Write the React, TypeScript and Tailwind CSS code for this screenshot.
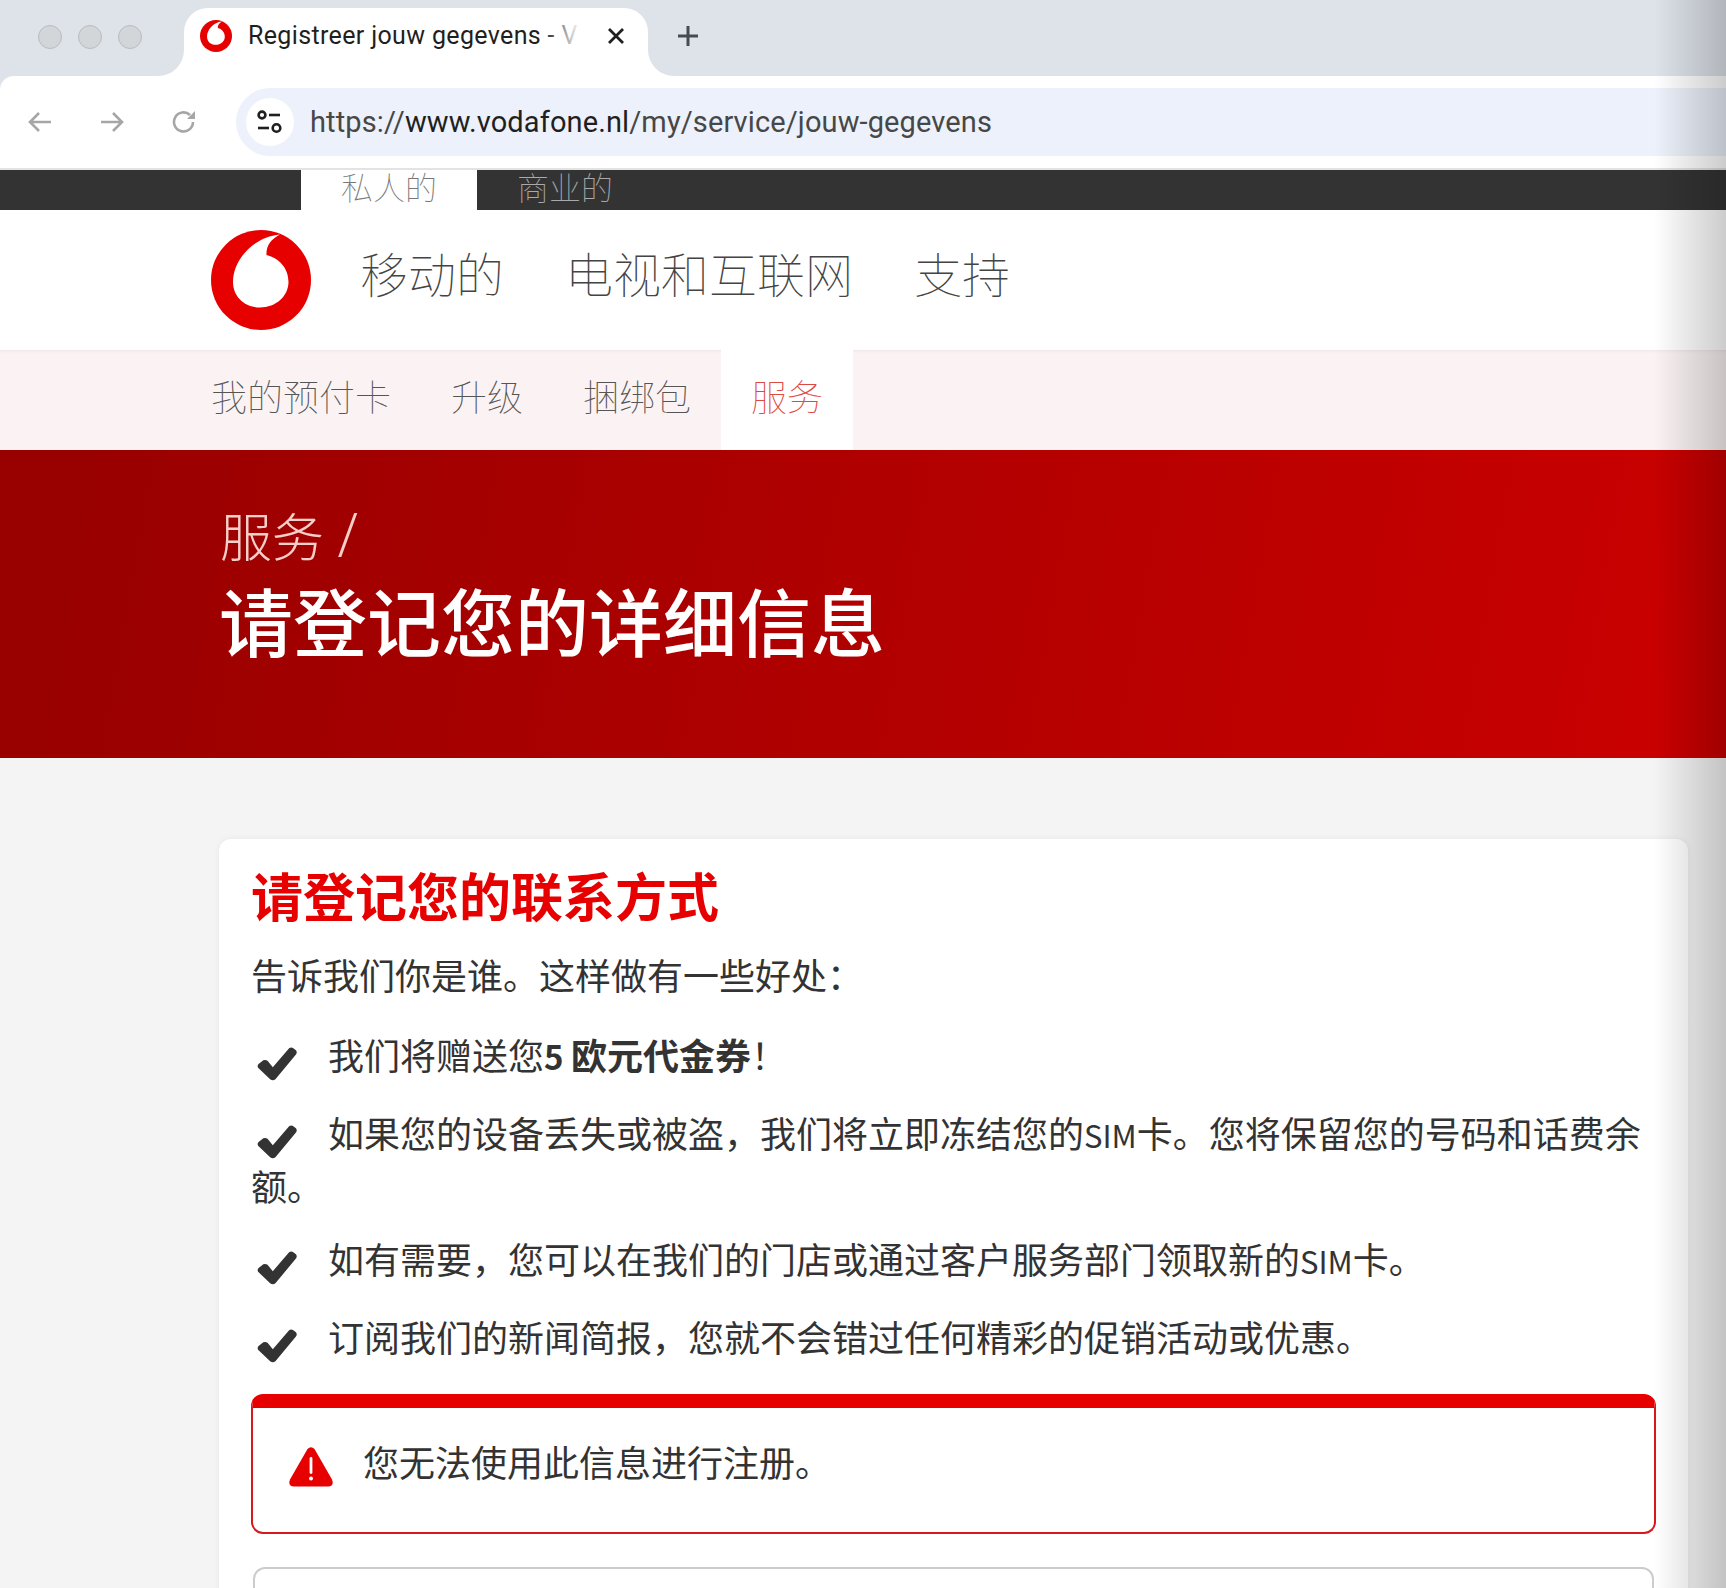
import React from "react";

function VodafoneLogo({ className }: { className: string }) {
  return (
    <svg viewBox="0 0 100 100" className={className}>
      <circle cx="50" cy="50" r="50" fill="#e60000" />
      <path
        d="M69 4.5 C42 7 22 30 22 52 C22 67 34 77.5 49 77.5 C65 77.5 77.5 66 77.5 52 C77.5 38 68 28 55.5 25 C55 16 60 9 69 4.5 Z"
        fill="#ffffff"
      />
    </svg>
  );
}

function Check() {
  return (
    <svg
      viewBox="0 0 38 32"
      className="inline-block w-[40px] h-[34px] ml-[6px] mr-[31px] align-[-11px]"
    >
      <path
        d="M1 19.5 Q0 17.5 1.5 16 L6 12.5 Q8 11.5 10 13 L15 19 L30.5 1 Q32.5 -0.5 34.5 1 L37 3 Q38.5 5 37 7 L17.5 30.5 Q15 32.5 12.5 30.5 Z"
        fill="#333333"
      />
    </svg>
  );
}

function Item({ children, tight }: { children: React.ReactNode; tight?: boolean }) {
  return (
    <li className={tight ? "mb-[22px] text-[36px] leading-[51px] text-[#333333]" : "mb-[25px] text-[36px] leading-[51px] text-[#333333]"}>
      <Check />
      {children}
    </li>
  );
}

export default function App() {
  return (
    <div className="relative h-[1588px] overflow-hidden bg-[#f4f4f4] [font-family:'Noto_Sans_CJK_SC','Noto_Sans',sans-serif]">
      {/* Browser chrome */}
      <div className="bg-[#dee3ea] [font-family:Roboto,'Liberation_Sans',sans-serif]">
        <div className="flex h-[76px] bg-white">
          <div className="flex w-[184px] shrink-0 items-start gap-[16px] rounded-br-[26px] bg-[#dee3ea] pl-[38px] pt-[25px]">
            <span className="h-[24px] w-[24px] rounded-full border border-[#b9bcbf] bg-[#d3d6d9]" />
            <span className="h-[24px] w-[24px] rounded-full border border-[#b9bcbf] bg-[#d3d6d9]" />
            <span className="h-[24px] w-[24px] rounded-full border border-[#b9bcbf] bg-[#d3d6d9]" />
          </div>
          <div className="w-[464px] shrink-0 bg-[#dee3ea]">
            <div className="relative mt-[8px] flex h-[68px] items-center rounded-t-[24px] bg-white pl-[16px]">
              <VodafoneLogo className="h-[32px] w-[32px] shrink-0 -mt-[12px]" />
              <div className="relative ml-[16px] -mt-[12px] w-[332px] overflow-hidden whitespace-nowrap text-[25px] tracking-[0.35px] leading-[32px] text-[#1f1f1f]">
                Registreer jouw gegevens - V
                <div className="absolute right-0 top-0 h-full w-[36px] bg-gradient-to-r from-transparent to-white" />
              </div>
              <svg viewBox="0 0 18 18" className="ml-[27px] -mt-[12px] h-[18px] w-[18px]">
                <path d="M2 2 L16 16 M16 2 L2 16" stroke="#1f1f1f" strokeWidth="2.8" />
              </svg>
            </div>
          </div>
          <div className="flex flex-1 items-start rounded-bl-[26px] bg-[#dee3ea] pl-[29px] pt-[25px]">
            <svg viewBox="0 0 22 22" className="h-[22px] w-[22px]">
              <path d="M11 1 V21 M1 11 H21" stroke="#474a50" strokeWidth="3" />
            </svg>
          </div>
        </div>
        <div className="flex h-[92px] items-center rounded-tl-[14px] bg-white pl-[28px]">
          <svg viewBox="0 0 24 24" className="h-[24px] w-[24px]" fill="none" stroke="#a6a6a6" strokeWidth="2.6">
            <path d="M23 12 H2 M11 3 L2 12 L11 21" />
          </svg>
          <svg viewBox="0 0 24 24" className="ml-[48px] h-[24px] w-[24px]" fill="none" stroke="#a6a6a6" strokeWidth="2.6">
            <path d="M1 12 H22 M13 3 L22 12 L13 21" />
          </svg>
          <svg viewBox="0 0 24 24" className="ml-[48px] h-[24px] w-[24px]" fill="none" stroke="#a6a6a6" strokeWidth="2.6">
            <path d="M21 12 A9.5 9.5 0 1 1 18 5" />
            <path d="M23 1 V9 H15 Z" fill="#a6a6a6" stroke="none" />
          </svg>
          <div className="ml-[40px] flex h-[68px] flex-1 items-center rounded-l-[34px] bg-[#ecf1fb] pl-[10px]">
            <div className="flex h-[48px] w-[48px] items-center justify-center rounded-full bg-white">
              <svg viewBox="0 0 26 24" className="h-[24px] w-[26px]" fill="none" stroke="#1f1f1f" strokeWidth="2.6">
                <circle cx="5" cy="5" r="3.4" />
                <path d="M12 5 H23" />
                <path d="M1 18 H12" />
                <circle cx="19.5" cy="18" r="3.8" />
              </svg>
            </div>
            <div className="ml-[16px] whitespace-nowrap text-[29px] tracking-[0.12px] leading-[36px] text-[#474747]">
              https://<span className="text-[#1f1f1f]">www.vodafone.nl</span>/my/service/jouw-gegevens
            </div>
          </div>
        </div>
        <div className="h-[2px] bg-[#e3e3e3]" />
      </div>

      {/* Top bar */}
      <div className="flex h-[40px] bg-[#333333] pl-[301px] text-[32px] font-thin leading-[32px]">
        <div className="bg-white px-[40px] text-[#777777]">私人的</div>
        <div className="px-[40px] text-[#aaaaaa]">商业的</div>
      </div>

      {/* Main nav */}
      <div className="flex h-[140px] items-center bg-white pl-[211px]">
        <VodafoneLogo className="h-[100px] w-[100px] shrink-0" />
        <nav className="-mt-[16px] ml-[49px] flex gap-[61px] text-[48px] font-thin leading-[60px] text-[#444444]">
          <span>移动的</span>
          <span>电视和互联网</span>
          <span>支持</span>
        </nav>
      </div>

      {/* Sub nav */}
      <div className="flex h-[100px] bg-[#fbf3f3] pl-[181px] text-[36px] font-thin leading-[90px] text-[#555555] shadow-[inset_0_3px_3px_-2px_rgba(0,0,0,0.06)]">
        <span className="px-[30px]">我的预付卡</span>
        <span className="px-[30px]">升级</span>
        <span className="px-[30px]">捆绑包</span>
        <span className="bg-white px-[30px] text-[#dd4a46]">服务</span>
      </div>

      {/* Hero */}
      <div className="h-[308px] bg-[linear-gradient(100deg,#990000_4%,#c90000_96%)] pl-[220px] pt-[52px]">
        <div className="text-[52px] font-light leading-[66px] text-[#f6cfca]">
          服务 <span className="ml-[2px] text-[60px] leading-[60px] [font-family:'Open_Sans',sans-serif] font-light">/</span>
        </div>
        <h1 className="mt-[6px] -ml-[1px] text-[74px] font-medium leading-[90px] text-white">请登记您的详细信息</h1>
      </div>

      {/* Content */}
      <div className="pl-[219px] pr-[38px] pt-[81px]">
        <div className="rounded-[12px] bg-white pb-[40px] pl-[32px] pr-[32px] pt-[24px] shadow-[0_0_6px_rgba(0,0,0,0.06)]">
          <h2 className="text-[52px] font-bold leading-[64px] text-[#e60000]">请登记您的联系方式</h2>
          <p className="mt-[22px] text-[36px] leading-[51px] text-[#333333]">告诉我们你是谁。这样做有一些好处：</p>
          <ul className="mt-[29px]">
            <Item>
              我们将赠送您<b className="font-bold"><span className="text-[33px]">5 </span>欧元代金券</b>！
            </Item>
            <Item tight>如果您的设备丢失或被盗，我们将立即冻结您的<span className="text-[31px]">SIM</span>卡。您将保留您的号码和话费余额。</Item>
            <Item>如有需要，您可以在我们的门店或通过客户服务部门领取新的<span className="text-[31px]">SIM</span>卡。</Item>
            <Item>订阅我们的新闻简报，您就不会错过任何精彩的促销活动或优惠。</Item>
          </ul>
          <div className="mt-[31px] flex h-[140px] items-start rounded-[12px] border-2 border-t-[14px] border-[#d8181c] border-t-[#e60000] pl-[36px] pt-[36px]">
            <svg viewBox="0 0 44 40" className="mt-[2px] h-[41px] w-[44px] shrink-0">
              <path
                d="M18.5 2.5 Q22 -1 25.5 2.5 L43 33 Q45.5 40 39 40 L5 40 Q-1.5 40 1 33 Z"
                fill="#e60000"
              />
              <path d="M22 12 V26" stroke="#ffffff" strokeWidth="2.8" strokeLinecap="round" />
              <circle cx="22" cy="32" r="2" fill="#ffffff" />
            </svg>
            <p className="ml-[30px] -mt-[8px] text-[36px] leading-[51px] text-[#333333]">您无法使用此信息进行注册。</p>
          </div>
          <div className="mx-[2px] mt-[33px] h-[80px] rounded-[12px] border-2 border-[#cccccc] bg-white" />
        </div>
      </div>

      {/* Window shadow lying over the right edge */}
      <div className="pointer-events-none absolute right-0 top-0 h-full w-[72px] bg-gradient-to-r from-transparent to-black/20" />
    </div>
  );
}
